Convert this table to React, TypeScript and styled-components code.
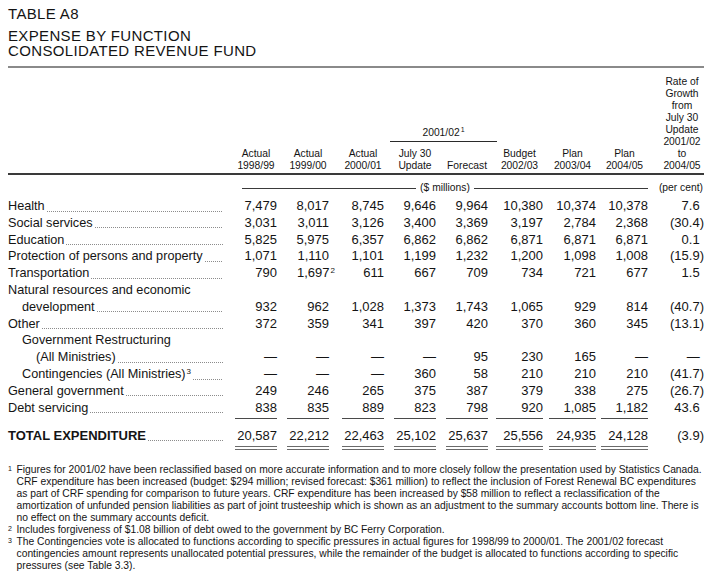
import React from 'react';
import styled, { createGlobalStyle } from 'styled-components';

const GlobalStyle = createGlobalStyle`
  html, body { margin: 0; padding: 0; background: #ffffff; }
  body {
    font-family: "Liberation Sans", Arial, Helvetica, sans-serif;
    color: #141414;
  }
`;

const COLS = '221px 48px 52px 55px 52px 52px 55px 53px 52px 56px';
const BAR_W = [42, 42, 42, 42, 42, 47, 47, 47];

const Page = styled.div`
  width: 696px;
  padding: 6px 8px 0;
`;

const TitleLine = styled.div<{ $gap?: number }>`
  font-size: 15px;
  line-height: 15px;
  letter-spacing: 0.35px;
  white-space: nowrap;
  margin-bottom: ${(p) => p.$gap ?? 0}px;
`;

const TopRule = styled.div`
  height: 2px;
  background: #8a8a8a;
  margin-top: 8px;
`;

const HeaderGrid = styled.div`
  display: grid;
  grid-template-columns: ${COLS};
  grid-template-rows: auto 24px;
  align-items: end;
  font-size: 10.3px;
  line-height: 12px;
  margin-top: 8px;
  padding-bottom: 1px;
  border-bottom: 2px solid #3a3a3a;
`;

const ColHead = styled.div<{ $col: number; $w: number }>`
  grid-column: ${(p) => p.$col};
  grid-row: 2;
  justify-self: end;
  width: ${(p) => p.$w}px;
  text-align: center;
  white-space: nowrap;
`;

const RateHead = styled.div`
  grid-column: 10;
  grid-row: 1 / span 2;
  justify-self: end;
  width: 44px;
  text-align: center;
`;

const GroupHead = styled.div`
  grid-column: 5 / 7;
  grid-row: 1;
  margin: 0 -9px 6px 6px;
  padding-bottom: 2px;
  border-bottom: 1px solid #2a2a2a;
  text-align: center;
`;

const Sup = styled.sup<{ $hang?: boolean; $size?: number }>`
  font-size: ${(p) => p.$size ?? 8}px;
  line-height: 0;
  vertical-align: 4px;
  margin-left: 1px;
  margin-right: ${(p) => (p.$hang ? '-6px' : '0')};
`;

const UnitGrid = styled.div`
  display: grid;
  grid-template-columns: ${COLS};
  align-items: center;
  font-size: 10.3px;
  line-height: 12px;
  margin-top: 7px;
`;

const UnitSpan = styled.div`
  grid-column: 2 / 10;
  margin-left: 13px;
  display: flex;
  align-items: center;
  gap: 4px;
`;

const UnitLine = styled.span`
  flex: 1;
  height: 1px;
  background: #3a3a3a;
`;

const UnitText = styled.span`
  white-space: nowrap;
`;

const PerCent = styled.div`
  grid-column: 10;
  text-align: right;
  padding-right: 1px;
  white-space: nowrap;
`;

const Body = styled.div`
  margin-top: 4px;
  font-size: 13px;
`;

const Row = styled.div<{ $total?: boolean }>`
  display: grid;
  grid-template-columns: ${COLS};
  line-height: 16.8px;
  margin-top: ${(p) => (p.$total ? '8.5px' : '0')};
`;

const LabelCell = styled.div<{ $indent: number; $bold?: boolean }>`
  display: flex;
  padding-left: ${(p) => p.$indent * 14}px;
  padding-right: 6px;
  white-space: nowrap;
  font-size: ${(p) => (p.$bold ? 13 : 12.7)}px;
  font-weight: ${(p) => (p.$bold ? 700 : 400)};
`;

const Leader = styled.span`
  flex: 1;
  margin: 0 0 0 2px;
  background-image: repeating-linear-gradient(
    to right,
    #8c8c8c 0,
    #8c8c8c 1px,
    transparent 1px,
    transparent 2px
  );
  background-size: 100% 1px;
  background-repeat: no-repeat;
  background-position: 0 12.6px;
`;

const NumCell = styled.div`
  display: flex;
  justify-content: flex-end;
  align-items: flex-start;
`;

const Figure = styled.div<{ $w: number; $rule?: 'single' | 'double' }>`
  width: ${(p) => p.$w}px;
  text-align: right;
  white-space: nowrap;
  padding-bottom: ${(p) => (p.$rule === 'single' ? '2px' : '0')};
  border-bottom: ${(p) => (p.$rule === 'single' ? '1px solid #4a4a4a' : '0')};
`;

const DoubleRule = styled.div`
  height: 2px;
  margin-top: 1px;
  border-top: 1px solid #6a6a6a;
  border-bottom: 1px solid #6a6a6a;
`;

const RateCell = styled.div`
  text-align: right;
  white-space: nowrap;
`;

const Ghost = styled.span`
  visibility: hidden;
`;

const Notes = styled.div`
  margin-top: 14px;
  font-size: 10.3px;
  line-height: 12.1px;
`;

const Note = styled.div`
  display: flex;
`;

const NoteMark = styled.span`
  width: 8.5px;
  flex: none;
  font-size: 7px;
  line-height: 10px;
`;

const NoteLine = styled.div`
  white-space: nowrap;
`;

type Val = { v: string; sup?: string };
type RowData = {
  label: string;
  labelSup?: string;
  indent?: number;
  leader?: boolean;
  values?: Val[];
  rate?: string;
  rule?: 'single' | 'double';
  total?: boolean;
};

const vals = (...a: (string | Val)[]): Val[] => a.map((x) => (typeof x === 'string' ? { v: x } : x));

const ROWS: RowData[] = [
  { label: 'Health', values: vals('7,479', '8,017', '8,745', '9,646', '9,964', '10,380', '10,374', '10,378'), rate: '7.6' },
  { label: 'Social services', values: vals('3,031', '3,011', '3,126', '3,400', '3,369', '3,197', '2,784', '2,368'), rate: '(30.4)' },
  { label: 'Education', values: vals('5,825', '5,975', '6,357', '6,862', '6,862', '6,871', '6,871', '6,871'), rate: '0.1' },
  { label: 'Protection of persons and property', values: vals('1,071', '1,110', '1,101', '1,199', '1,232', '1,200', '1,098', '1,008'), rate: '(15.9)' },
  { label: 'Transportation', values: vals('790', { v: '1,697', sup: '2' }, '611', '667', '709', '734', '721', '677'), rate: '1.5' },
  { label: 'Natural resources and economic', leader: false },
  { label: 'development', indent: 1, values: vals('932', '962', '1,028', '1,373', '1,743', '1,065', '929', '814'), rate: '(40.7)' },
  { label: 'Other', values: vals('372', '359', '341', '397', '420', '370', '360', '345'), rate: '(13.1)' },
  { label: 'Government Restructuring', indent: 1, leader: false },
  { label: '(All Ministries)', indent: 2, values: vals('—', '—', '—', '—', '95', '230', '165', '—'), rate: '—' },
  { label: 'Contingencies (All Ministries)', labelSup: '3', indent: 1, values: vals('—', '—', '—', '360', '58', '210', '210', '210'), rate: '(41.7)' },
  { label: 'General government', values: vals('249', '246', '265', '375', '387', '379', '338', '275'), rate: '(26.7)' },
  { label: 'Debt servicing', values: vals('838', '835', '889', '823', '798', '920', '1,085', '1,182'), rate: '43.6', rule: 'single' },
  { label: 'TOTAL EXPENDITURE', values: vals('20,587', '22,212', '22,463', '25,102', '25,637', '25,556', '24,935', '24,128'), rate: '(3.9)', rule: 'double', total: true },
];

const HEADS: { top: string; bottom: string; col: number }[] = [
  { top: 'Actual', bottom: '1998/99', col: 2 },
  { top: 'Actual', bottom: '1999/00', col: 3 },
  { top: 'Actual', bottom: '2000/01', col: 4 },
  { top: 'July 30', bottom: 'Update', col: 5 },
  { top: '', bottom: 'Forecast', col: 6 },
  { top: 'Budget', bottom: '2002/03', col: 7 },
  { top: 'Plan', bottom: '2003/04', col: 8 },
  { top: 'Plan', bottom: '2004/05', col: 9 },
];

const Rate: React.FC<{ value?: string }> = ({ value }) => {
  if (!value) return <RateCell />;
  const paren = value.endsWith(')');
  return (
    <RateCell>
      {value}
      {!paren && <Ghost>)</Ghost>}
    </RateCell>
  );
};

const TableRow: React.FC<{ row: RowData }> = ({ row }) => {
  const showLeader = row.leader !== false;
  return (
    <Row $total={row.total}>
      <LabelCell $indent={row.indent ?? 0} $bold={row.total}>
        <span>
          {row.label}
          {row.labelSup && <Sup>{row.labelSup}</Sup>}
        </span>
        {showLeader && <Leader />}
      </LabelCell>
      {BAR_W.map((w, i) => {
        const val = row.values?.[i];
        return (
          <NumCell key={i}>
            {val && (
              <Figure $w={w} $rule={row.rule}>
                {val.v}
                {val.sup && <Sup $hang>{val.sup}</Sup>}
                {row.rule === 'double' && <DoubleRule />}
              </Figure>
            )}
          </NumCell>
        );
      })}
      <Rate value={row.rate} />
    </Row>
  );
};

const NOTES: { mark: string; lines: string[] }[] = [
  {
    mark: '1',
    lines: [
      'Figures for 2001/02 have been reclassified based on more accurate information and to more closely follow the presentation used by Statistics Canada.',
      'CRF expenditure has been increased (budget: $294 million; revised forecast: $361 million) to reflect the inclusion of Forest Renewal BC expenditures',
      'as part of CRF spending for comparison to future years. CRF expenditure has been increased by $58 million to reflect a reclassification of the',
      'amortization of unfunded pension liabilities as part of joint trusteeship which is shown as an adjustment to the summary accounts bottom line. There is',
      'no effect on the summary accounts deficit.',
    ],
  },
  {
    mark: '2',
    lines: ['Includes forgiveness of $1.08 billion of debt owed to the government by BC Ferry Corporation.'],
  },
  {
    mark: '3',
    lines: [
      'The Contingencies vote is allocated to functions according to specific pressures in actual figures for 1998/99 to 2000/01. The 2001/02 forecast',
      'contingencies amount represents unallocated potential pressures, while the remainder of the budget is allocated to functions according to specific',
      'pressures (see Table 3.3).',
    ],
  },
];

export default function App() {
  return (
    <>
      <GlobalStyle />
      <Page>
        <TitleLine $gap={7}>TABLE A8</TitleLine>
        <TitleLine>EXPENSE BY FUNCTION</TitleLine>
        <TitleLine>CONSOLIDATED REVENUE FUND</TitleLine>
        <TopRule />

        <HeaderGrid>
          <GroupHead>
            2001/02<Sup $size={7}>1</Sup>
          </GroupHead>
          {HEADS.map((h, i) => (
            <ColHead key={h.col} $col={h.col} $w={BAR_W[i]}>
              {h.top || '\u00a0'}
              <br />
              {h.bottom}
            </ColHead>
          ))}
          <RateHead>
            Rate of
            <br />
            Growth
            <br />
            from
            <br />
            July 30
            <br />
            Update
            <br />
            2001/02
            <br />
            to
            <br />
            2004/05
          </RateHead>
        </HeaderGrid>

        <UnitGrid>
          <UnitSpan>
            <UnitLine />
            <UnitText>($ millions)</UnitText>
            <UnitLine />
          </UnitSpan>
          <PerCent>(per cent)</PerCent>
        </UnitGrid>

        <Body>
          {ROWS.map((r, i) => (
            <TableRow key={i} row={r} />
          ))}
        </Body>

        <Notes>
          {NOTES.map((n) => (
            <Note key={n.mark}>
              <NoteMark>{n.mark}</NoteMark>
              <div>
                {n.lines.map((l, j) => (
                  <NoteLine key={j}>{l}</NoteLine>
                ))}
              </div>
            </Note>
          ))}
        </Notes>
      </Page>
    </>
  );
}
